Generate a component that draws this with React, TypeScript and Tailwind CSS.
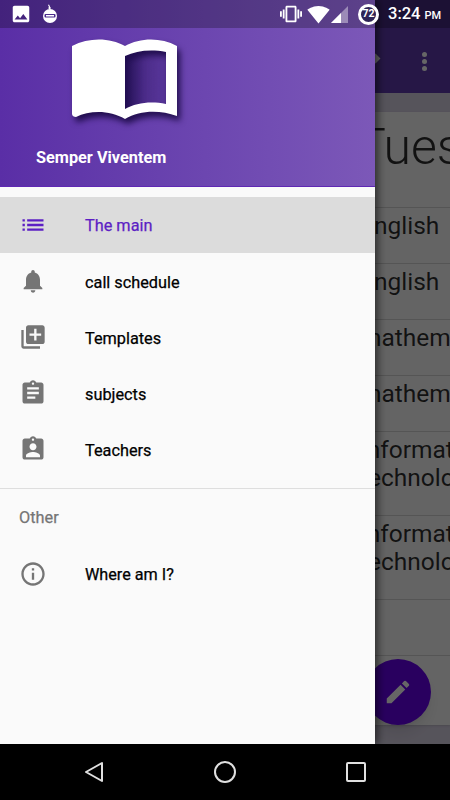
import React from 'react'
import { MdEdit, MdImage, MdInfoOutline, MdList, MdLibraryAdd, MdNotifications, MdAssignment, MdAssignmentInd, MdSignalWifi4Bar, MdVibration } from 'react-icons/md'

const menuItems = [
    { label: 'The main', icon: MdList, active: true },
    { label: 'call schedule', icon: MdNotifications },
    { label: 'Templates', icon: MdLibraryAdd },
    { label: 'subjects', icon: MdAssignment },
    { label: 'Teachers', icon: MdAssignmentInd },
]

const lessons = [
    { lines: ['English'] },
    { lines: ['English'] },
    { lines: ['mathematics'] },
    { lines: ['mathematics'] },
    { lines: ['Informatics', 'technology'] },
    { lines: ['Informatics', 'technology'] },
    { lines: [] },
    { lines: [] },
]

const StatusBar = () => (
    <div className="absolute top-0 left-0 w-full h-[28px] bg-black/25 flex items-center text-white">
        <MdImage size={22} className="ml-[10px]" />
        <svg width="16" height="20" viewBox="0 0 16 20" className="ml-[10px]">
            <path d="M8 5a1 1 0 0 1-1-2l-1-2 1-.5 1.2 2.500C9 3.200 9 5 8 5z" fill="white" />
            <circle cx="8" cy="12" r="7" fill="white" />
            <rect x="2.500" y="10" width="11" height="3.500" rx="1" fill="#4b2a8c" />
            <rect x="4" y="11" width="8" height="1.500" fill="white" />
        </svg>
        <div className="ml-auto flex items-center">
            <MdVibration size={22} />
            <MdSignalWifi4Bar size={23} className="ml-[5px]" />
            <svg width="17" height="17" viewBox="0 0 17 17" className="ml-[1px]">
                <path d="M0 17 17 0v17z" fill="white" fillOpacity="0.4" />
                <path d="M0 17 10 7v10z" fill="white" />
            </svg>
            <div className="ml-[10px] w-[21px] h-[21px] rounded-full border-[3px] border-white bg-[#2e2456] flex items-center justify-center text-[10.500px] font-bold leading-none">
                72
            </div>
            <div className="ml-[9px] w-[62px] font-medium text-[16.500px] leading-none">
                3:24 <span className="text-[11px]">PM</span>
            </div>
        </div>
    </div>
)

const BookLogo = () => (
    <svg width="116" height="92" viewBox="0 0 116 92" className="drop-shadow-[3px_5px_3px_rgba(20,5,60,0.85)]">
        <defs>
            <linearGradient id="pageShade" x1="0" x2="1" y1="0" y2="0">
                <stop offset="0" stopColor="#1e0c50" stopOpacity="0.6" />
                <stop offset="0.45" stopColor="#1e0c50" stopOpacity="0.2" />
                <stop offset="1" stopColor="#1e0c50" stopOpacity="0.1" />
            </linearGradient>
        </defs>
        <path d="M55 19v53c11-6 25-8 41-5V15c-16-3-30-1-41 4z" fill="url(#pageShade)" />
        <path
            fillRule="evenodd"
            fill="white"
            d="M2 9C20 0 40 1 55 9 70 1 90 0 107 9v70c-17-6-37-6-52 3-15-9-35-9-49-2-2 0-4-1-4-3zM55 19v53c11-6 25-8 41-5V15c-16-3-30-1-41 4z"
        />
    </svg>
)

const App: React.FC = () => {
    return (
        <div className="w-[450px] h-[800px] flex flex-col overflow-hidden bg-black font-['Roboto',sans-serif]">
            <div className="relative h-[744px] overflow-hidden bg-[#d8d2e4]">
                {/* Screen behind the drawer */}
                <div className="h-[93px] bg-[#5f3bb0]" />
                <div className="absolute top-[55px] left-[372px] w-[7px] h-[7px] rotate-45 bg-white" />
                <div className="absolute top-[52px] left-[422px] flex flex-col gap-[2px]">
                    <div className="w-[5px] h-[5px] rounded-full bg-white" />
                    <div className="w-[5px] h-[5px] rounded-full bg-white" />
                    <div className="w-[5px] h-[5px] rounded-full bg-white" />
                </div>
                <div className="mt-[19px] mx-[-1px] bg-[#fafafa] h-[613px] pl-[357px] text-[#000000d0] whitespace-nowrap shadow">
                    <div className="h-[95px] pt-[3px] text-[50px] leading-[64px] font-light">Tuesday</div>
                    {lessons.map((lesson, i) => (
                        <div
                            key={i}
                            className={`-ml-[357px] pl-[361px] border-t border-black/15 pt-[4px] pb-[23px] text-[24.500px] leading-[28px] ${lesson.lines.length === 0 ? 'h-[56px]' : ''}`}
                        >
                            {lesson.lines.map(line => (
                                <div key={line}>{line}</div>
                            ))}
                        </div>
                    ))}
                </div>
                <div className="absolute left-[365px] top-[659px] w-[66px] h-[66px] rounded-full bg-[#6600ee] flex items-center justify-center shadow-lg">
                    <MdEdit size={30} className="text-white" />
                </div>
                <div className="absolute inset-0 bg-black/60" />

                {/* Drawer */}
                <div className="absolute top-0 left-0 w-[375px] h-full bg-[#fafafa] shadow-[3px_0_8px_rgba(0,0,0,0.55)]">
                    <div className="h-[187px] bg-gradient-to-r from-[#5a2ea6] to-[#7c58b8] border-b border-[#5f28b4]">
                        <div className="pt-[37px] pl-[70px]">
                            <BookLogo />
                        </div>
                        <div className="mt-[19px] pl-[36px] text-white font-bold text-[16.300px] leading-[20px]">Semper Viventem</div>
                    </div>
                    <div className="pt-[10px]">
                        {menuItems.map(item => {
                            const Icon = item.icon
                            return (
                                <div
                                    key={item.label}
                                    className={`h-[56px] flex items-center pl-[19px] text-[16.300px] [-webkit-text-stroke:0.25px] ${item.active ? 'bg-[#dcdcdc] text-[#5c1fc4]' : 'text-black'}`}
                                >
                                    <Icon size={28} className={item.active ? 'text-[#5c1fc4]' : 'text-[#757575]'} />
                                    <span className={`ml-[38px] ${item.active ? 'pt-[2px]' : 'pt-[4px]'}`}>{item.label}</span>
                                </div>
                            )
                        })}
                    </div>
                    <div className="mt-[11px] border-t border-[#dedede] pt-[18px] pl-[19px] text-[16.300px] [-webkit-text-stroke:0.25px] leading-[22px] text-[#757575]">Other</div>
                    <div className="mt-[17px] h-[56px] flex items-center pl-[19px] text-[16.200px] [-webkit-text-stroke:0.25px] text-black">
                        <MdInfoOutline size={28} className="text-[#757575]" />
                        <span className="ml-[38px] pt-[3px]">Where am I?</span>
                    </div>
                </div>

                <StatusBar />
            </div>

            {/* Navigation bar */}
            <div className="h-[56px] flex items-center justify-center">
                <div className="w-[131px] flex justify-center">
                    <svg width="20" height="22" viewBox="0 0 20 22" fill="none" stroke="#e0e0e0" strokeWidth="2" strokeLinejoin="round">
                        <path d="M18 2v18L2 11z" />
                    </svg>
                </div>
                <div className="w-[131px] flex justify-center">
                    <div className="w-[22px] h-[22px] rounded-full border-2 border-[#e0e0e0]" />
                </div>
                <div className="w-[131px] flex justify-center">
                    <div className="w-[20px] h-[20px] rounded-[2px] border-2 border-[#e0e0e0]" />
                </div>
            </div>
        </div>
    )
}

export default App
